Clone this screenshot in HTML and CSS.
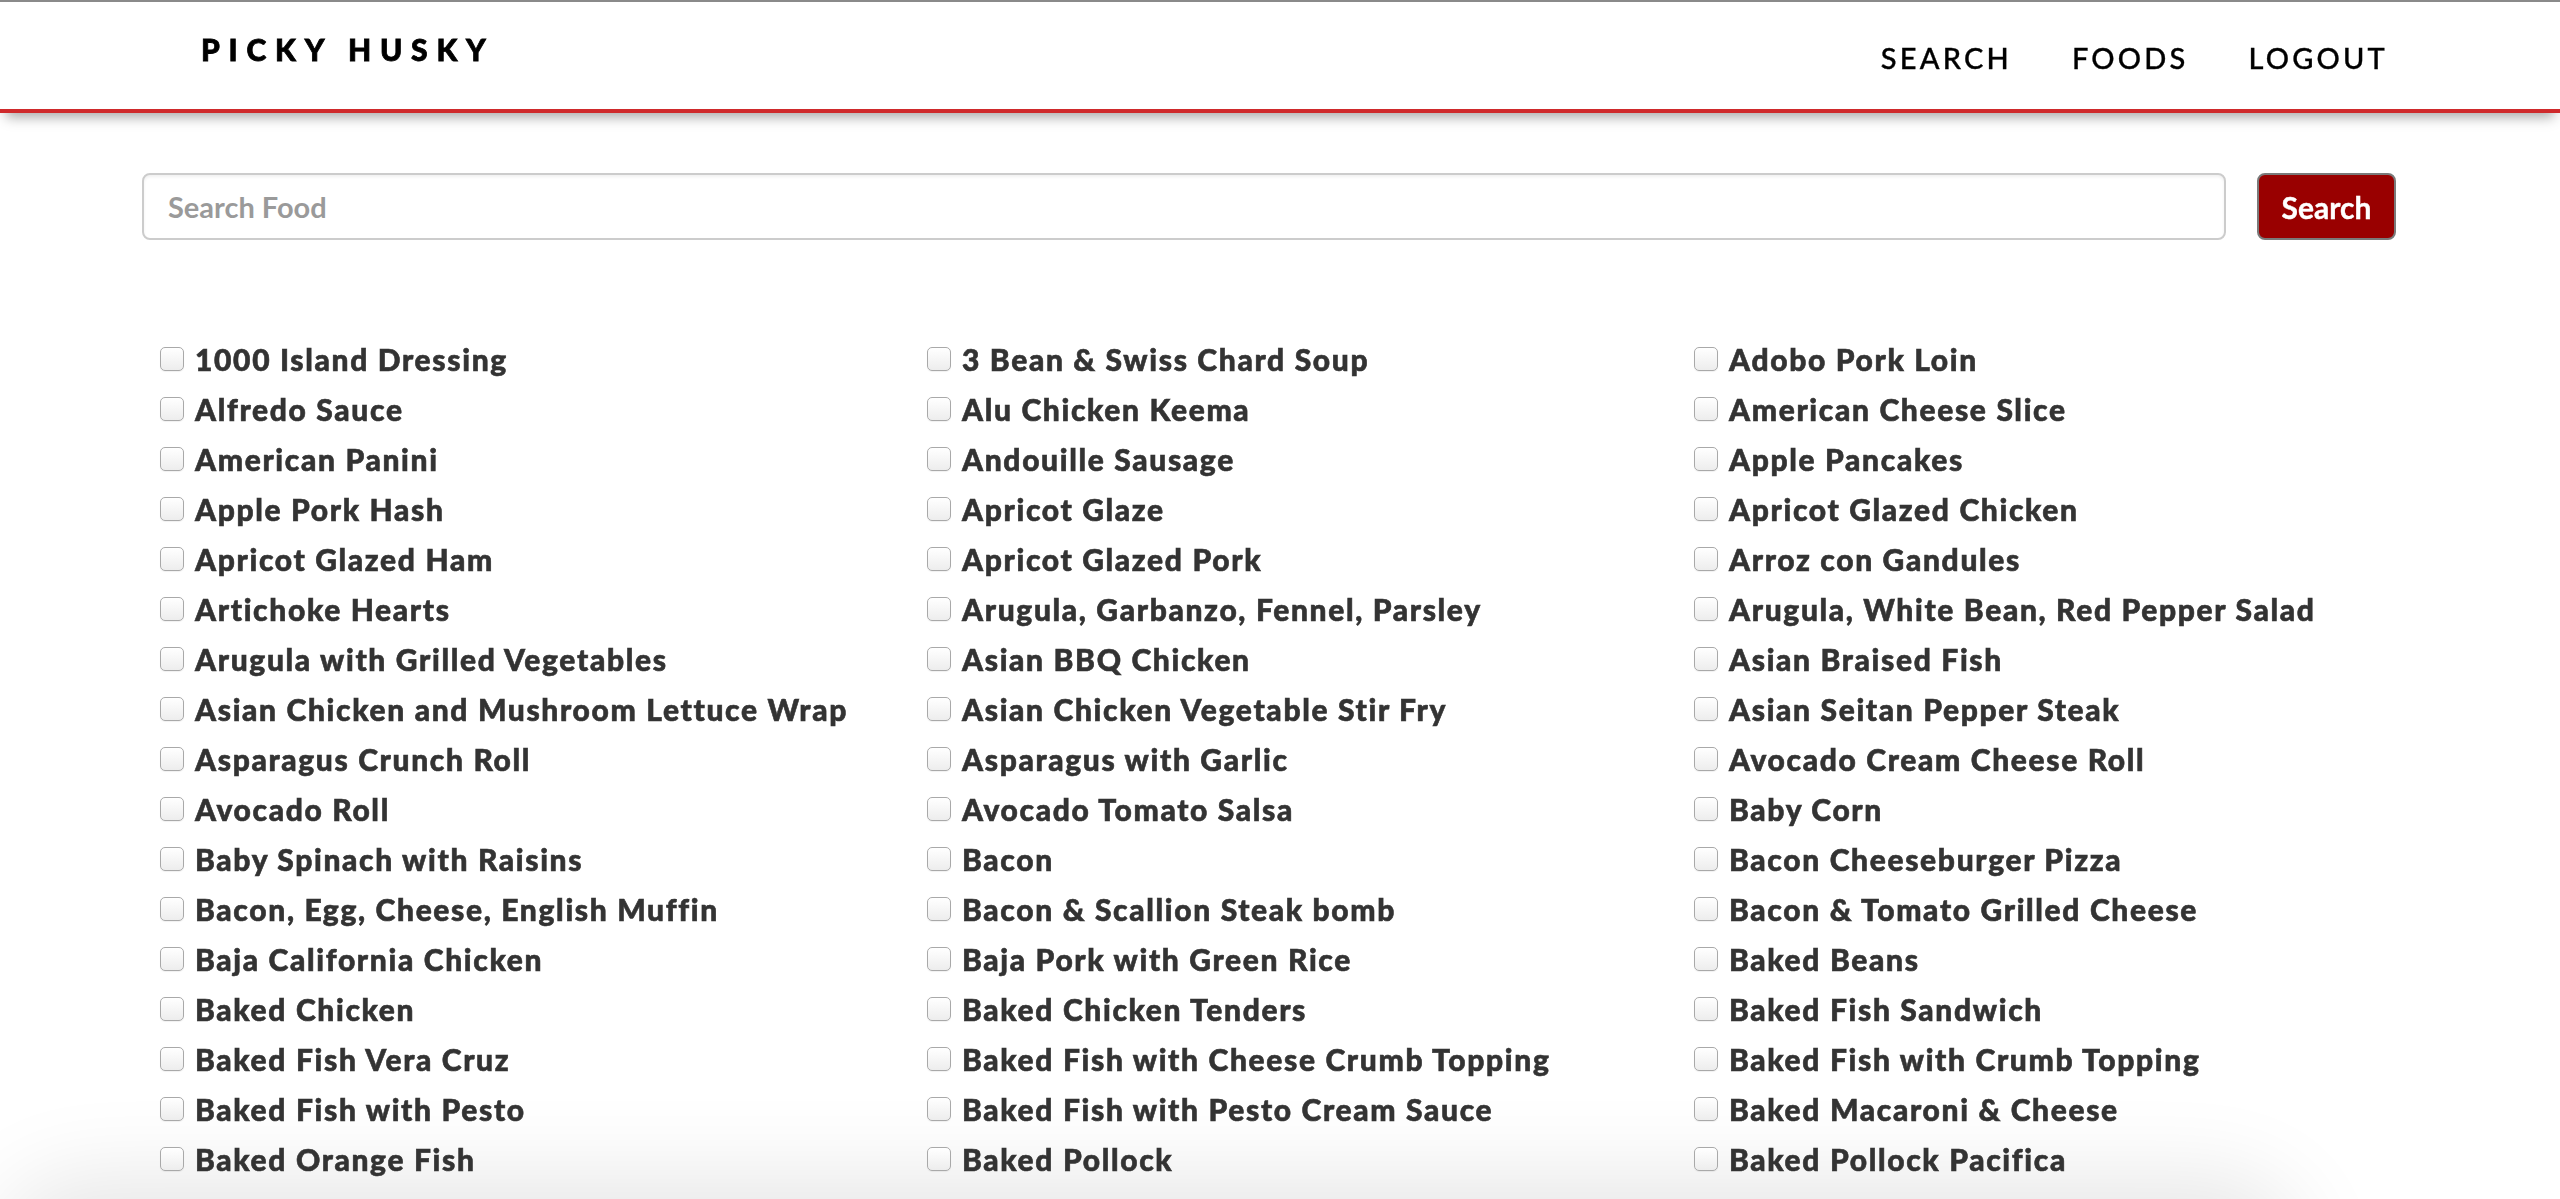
FILE: index.html
```html
<!DOCTYPE html>
<html lang="en">
<head>
<meta charset="utf-8">
<title>Picky Husky</title>
<link rel="stylesheet" href="styles.css">
</head>
<body>
<header class="topbar">
  <div class="logo">PICKY HUSKY</div>
  <nav class="nav">
    <a class="nav-link" href="#">SEARCH</a>
    <a class="nav-link" href="#">FOODS</a>
    <a class="nav-link" href="#">LOGOUT</a>
  </nav>
</header>
<main class="page">
  <form class="search-form">
    <input class="search-input" type="text" placeholder="Search Food">
    <button class="search-btn" type="button">Search</button>
  </form>
  <ul class="food-list">
    <li class="food"><input type="checkbox" class="cb"><span>1000 Island Dressing</span></li>
    <li class="food"><input type="checkbox" class="cb"><span>3 Bean &amp; Swiss Chard Soup</span></li>
    <li class="food"><input type="checkbox" class="cb"><span>Adobo Pork Loin</span></li>
    <li class="food"><input type="checkbox" class="cb"><span>Alfredo Sauce</span></li>
    <li class="food"><input type="checkbox" class="cb"><span>Alu Chicken Keema</span></li>
    <li class="food"><input type="checkbox" class="cb"><span>American Cheese Slice</span></li>
    <li class="food"><input type="checkbox" class="cb"><span>American Panini</span></li>
    <li class="food"><input type="checkbox" class="cb"><span>Andouille Sausage</span></li>
    <li class="food"><input type="checkbox" class="cb"><span>Apple Pancakes</span></li>
    <li class="food"><input type="checkbox" class="cb"><span>Apple Pork Hash</span></li>
    <li class="food"><input type="checkbox" class="cb"><span>Apricot Glaze</span></li>
    <li class="food"><input type="checkbox" class="cb"><span>Apricot Glazed Chicken</span></li>
    <li class="food"><input type="checkbox" class="cb"><span>Apricot Glazed Ham</span></li>
    <li class="food"><input type="checkbox" class="cb"><span>Apricot Glazed Pork</span></li>
    <li class="food"><input type="checkbox" class="cb"><span>Arroz con Gandules</span></li>
    <li class="food"><input type="checkbox" class="cb"><span>Artichoke Hearts</span></li>
    <li class="food"><input type="checkbox" class="cb"><span>Arugula, Garbanzo, Fennel, Parsley</span></li>
    <li class="food"><input type="checkbox" class="cb"><span>Arugula, White Bean, Red Pepper Salad</span></li>
    <li class="food"><input type="checkbox" class="cb"><span>Arugula with Grilled Vegetables</span></li>
    <li class="food"><input type="checkbox" class="cb"><span>Asian BBQ Chicken</span></li>
    <li class="food"><input type="checkbox" class="cb"><span>Asian Braised Fish</span></li>
    <li class="food"><input type="checkbox" class="cb"><span>Asian Chicken and Mushroom Lettuce Wrap</span></li>
    <li class="food"><input type="checkbox" class="cb"><span>Asian Chicken Vegetable Stir Fry</span></li>
    <li class="food"><input type="checkbox" class="cb"><span>Asian Seitan Pepper Steak</span></li>
    <li class="food"><input type="checkbox" class="cb"><span>Asparagus Crunch Roll</span></li>
    <li class="food"><input type="checkbox" class="cb"><span>Asparagus with Garlic</span></li>
    <li class="food"><input type="checkbox" class="cb"><span>Avocado Cream Cheese Roll</span></li>
    <li class="food"><input type="checkbox" class="cb"><span>Avocado Roll</span></li>
    <li class="food"><input type="checkbox" class="cb"><span>Avocado Tomato Salsa</span></li>
    <li class="food"><input type="checkbox" class="cb"><span>Baby Corn</span></li>
    <li class="food"><input type="checkbox" class="cb"><span>Baby Spinach with Raisins</span></li>
    <li class="food"><input type="checkbox" class="cb"><span>Bacon</span></li>
    <li class="food"><input type="checkbox" class="cb"><span>Bacon Cheeseburger Pizza</span></li>
    <li class="food"><input type="checkbox" class="cb"><span>Bacon, Egg, Cheese, English Muffin</span></li>
    <li class="food"><input type="checkbox" class="cb"><span>Bacon &amp; Scallion Steak bomb</span></li>
    <li class="food"><input type="checkbox" class="cb"><span>Bacon &amp; Tomato Grilled Cheese</span></li>
    <li class="food"><input type="checkbox" class="cb"><span>Baja California Chicken</span></li>
    <li class="food"><input type="checkbox" class="cb"><span>Baja Pork with Green Rice</span></li>
    <li class="food"><input type="checkbox" class="cb"><span>Baked Beans</span></li>
    <li class="food"><input type="checkbox" class="cb"><span>Baked Chicken</span></li>
    <li class="food"><input type="checkbox" class="cb"><span>Baked Chicken Tenders</span></li>
    <li class="food"><input type="checkbox" class="cb"><span>Baked Fish Sandwich</span></li>
    <li class="food"><input type="checkbox" class="cb"><span>Baked Fish Vera Cruz</span></li>
    <li class="food"><input type="checkbox" class="cb"><span>Baked Fish with Cheese Crumb Topping</span></li>
    <li class="food"><input type="checkbox" class="cb"><span>Baked Fish with Crumb Topping</span></li>
    <li class="food"><input type="checkbox" class="cb"><span>Baked Fish with Pesto</span></li>
    <li class="food"><input type="checkbox" class="cb"><span>Baked Fish with Pesto Cream Sauce</span></li>
    <li class="food"><input type="checkbox" class="cb"><span>Baked Macaroni &amp; Cheese</span></li>
    <li class="food"><input type="checkbox" class="cb"><span>Baked Orange Fish</span></li>
    <li class="food"><input type="checkbox" class="cb"><span>Baked Pollock</span></li>
    <li class="food"><input type="checkbox" class="cb"><span>Baked Pollock Pacifica</span></li>
  </ul>
</main>
<div class="bottom-shade"></div>
</body>
</html>
```

FILE: styles.css
```css
html, body {
  margin: 0;
  padding: 0;
}
body {
  font-family: Lato, "Liberation Sans", sans-serif;
  color: #333;
  overflow: hidden;
  height: 1199px;
}

.topbar {
  position: relative;
  z-index: 2;
  box-sizing: border-box;
  height: 113px;
  border-top: 2px solid #8a8a8a;
  border-bottom: 4px solid #cf2a2c;
  background: #fff;
  box-shadow: 0 10px 12px -6px rgba(0, 0, 0, 0.35);
  display: flex;
  justify-content: space-between;
  align-items: flex-start;
  padding: 0 172px 0 201px;
}

.logo {
  padding-top: 32px;
  font-size: 30px;
  line-height: 30px;
  font-weight: 900;
  letter-spacing: 8.8px;
  color: #000;
  -webkit-text-stroke: 0.8px #000;
}

.nav {
  display: flex;
  gap: 60px;
  padding-top: 41px;
}

.nav-link {
  font-size: 29px;
  line-height: 29px;
  font-weight: 500;
  letter-spacing: 3.2px;
  color: #000;
  text-decoration: none;
  -webkit-text-stroke: 0.35px #000;
}

.page {
  padding: 60px 0 0 0;
}

.search-form {
  display: flex;
  gap: 31px;
  padding: 0 164px 0 142px;
  margin: 0;
}

.search-input {
  flex: 1;
  box-sizing: border-box;
  height: 67px;
  border: 2px solid #cccccc;
  border-radius: 8px;
  padding: 0 24px;
  font-family: Lato, "Liberation Sans", sans-serif;
  font-size: 29px;
  font-weight: 700;
  color: #333;
  box-shadow: inset 0 2px 3px rgba(0, 0, 0, 0.06);
  outline: none;
}
.search-input::placeholder {
  color: #9a9a9a;
}

.search-btn {
  box-sizing: border-box;
  width: 139px;
  height: 67px;
  background: #990000;
  border: 2px solid #7a7a7a;
  border-radius: 8px;
  color: #fff;
  font-family: Lato, "Liberation Sans", sans-serif;
  font-size: 30px;
  font-weight: 700;
  padding: 0;
  -webkit-text-stroke: 0.4px #fff;
}

.food-list {
  list-style: none;
  margin: 94px 0 0 0;
  padding: 0 0 0 160px;
  display: grid;
  grid-template-columns: repeat(3, 767px);
  grid-auto-rows: 50px;
}

.food {
  display: flex;
  align-items: center;
  gap: 11px;
  font-size: 30px;
  line-height: 50px;
  font-weight: 900;
  letter-spacing: 1.65px;
  color: #333;
  white-space: nowrap;
  -webkit-text-stroke: 0.6px #333;
}

.cb {
  appearance: none;
  -webkit-appearance: none;
  box-sizing: border-box;
  width: 24px;
  height: 24px;
  margin: 0;
  flex: none;
  border: 1px solid #a9a9a9;
  border-radius: 5px;
  background: linear-gradient(#ffffff, #ededed);
  box-shadow: 0 1px 1px rgba(0, 0, 0, 0.06);
}

.bottom-shade {
  position: fixed;
  left: 20px;
  right: 280px;
  bottom: -140px;
  height: 140px;
  border-radius: 60px;
  background: #fff;
  box-shadow: 0 0 90px 20px rgba(0, 0, 0, 0.10);
  z-index: -1;
  pointer-events: none;
}
```
